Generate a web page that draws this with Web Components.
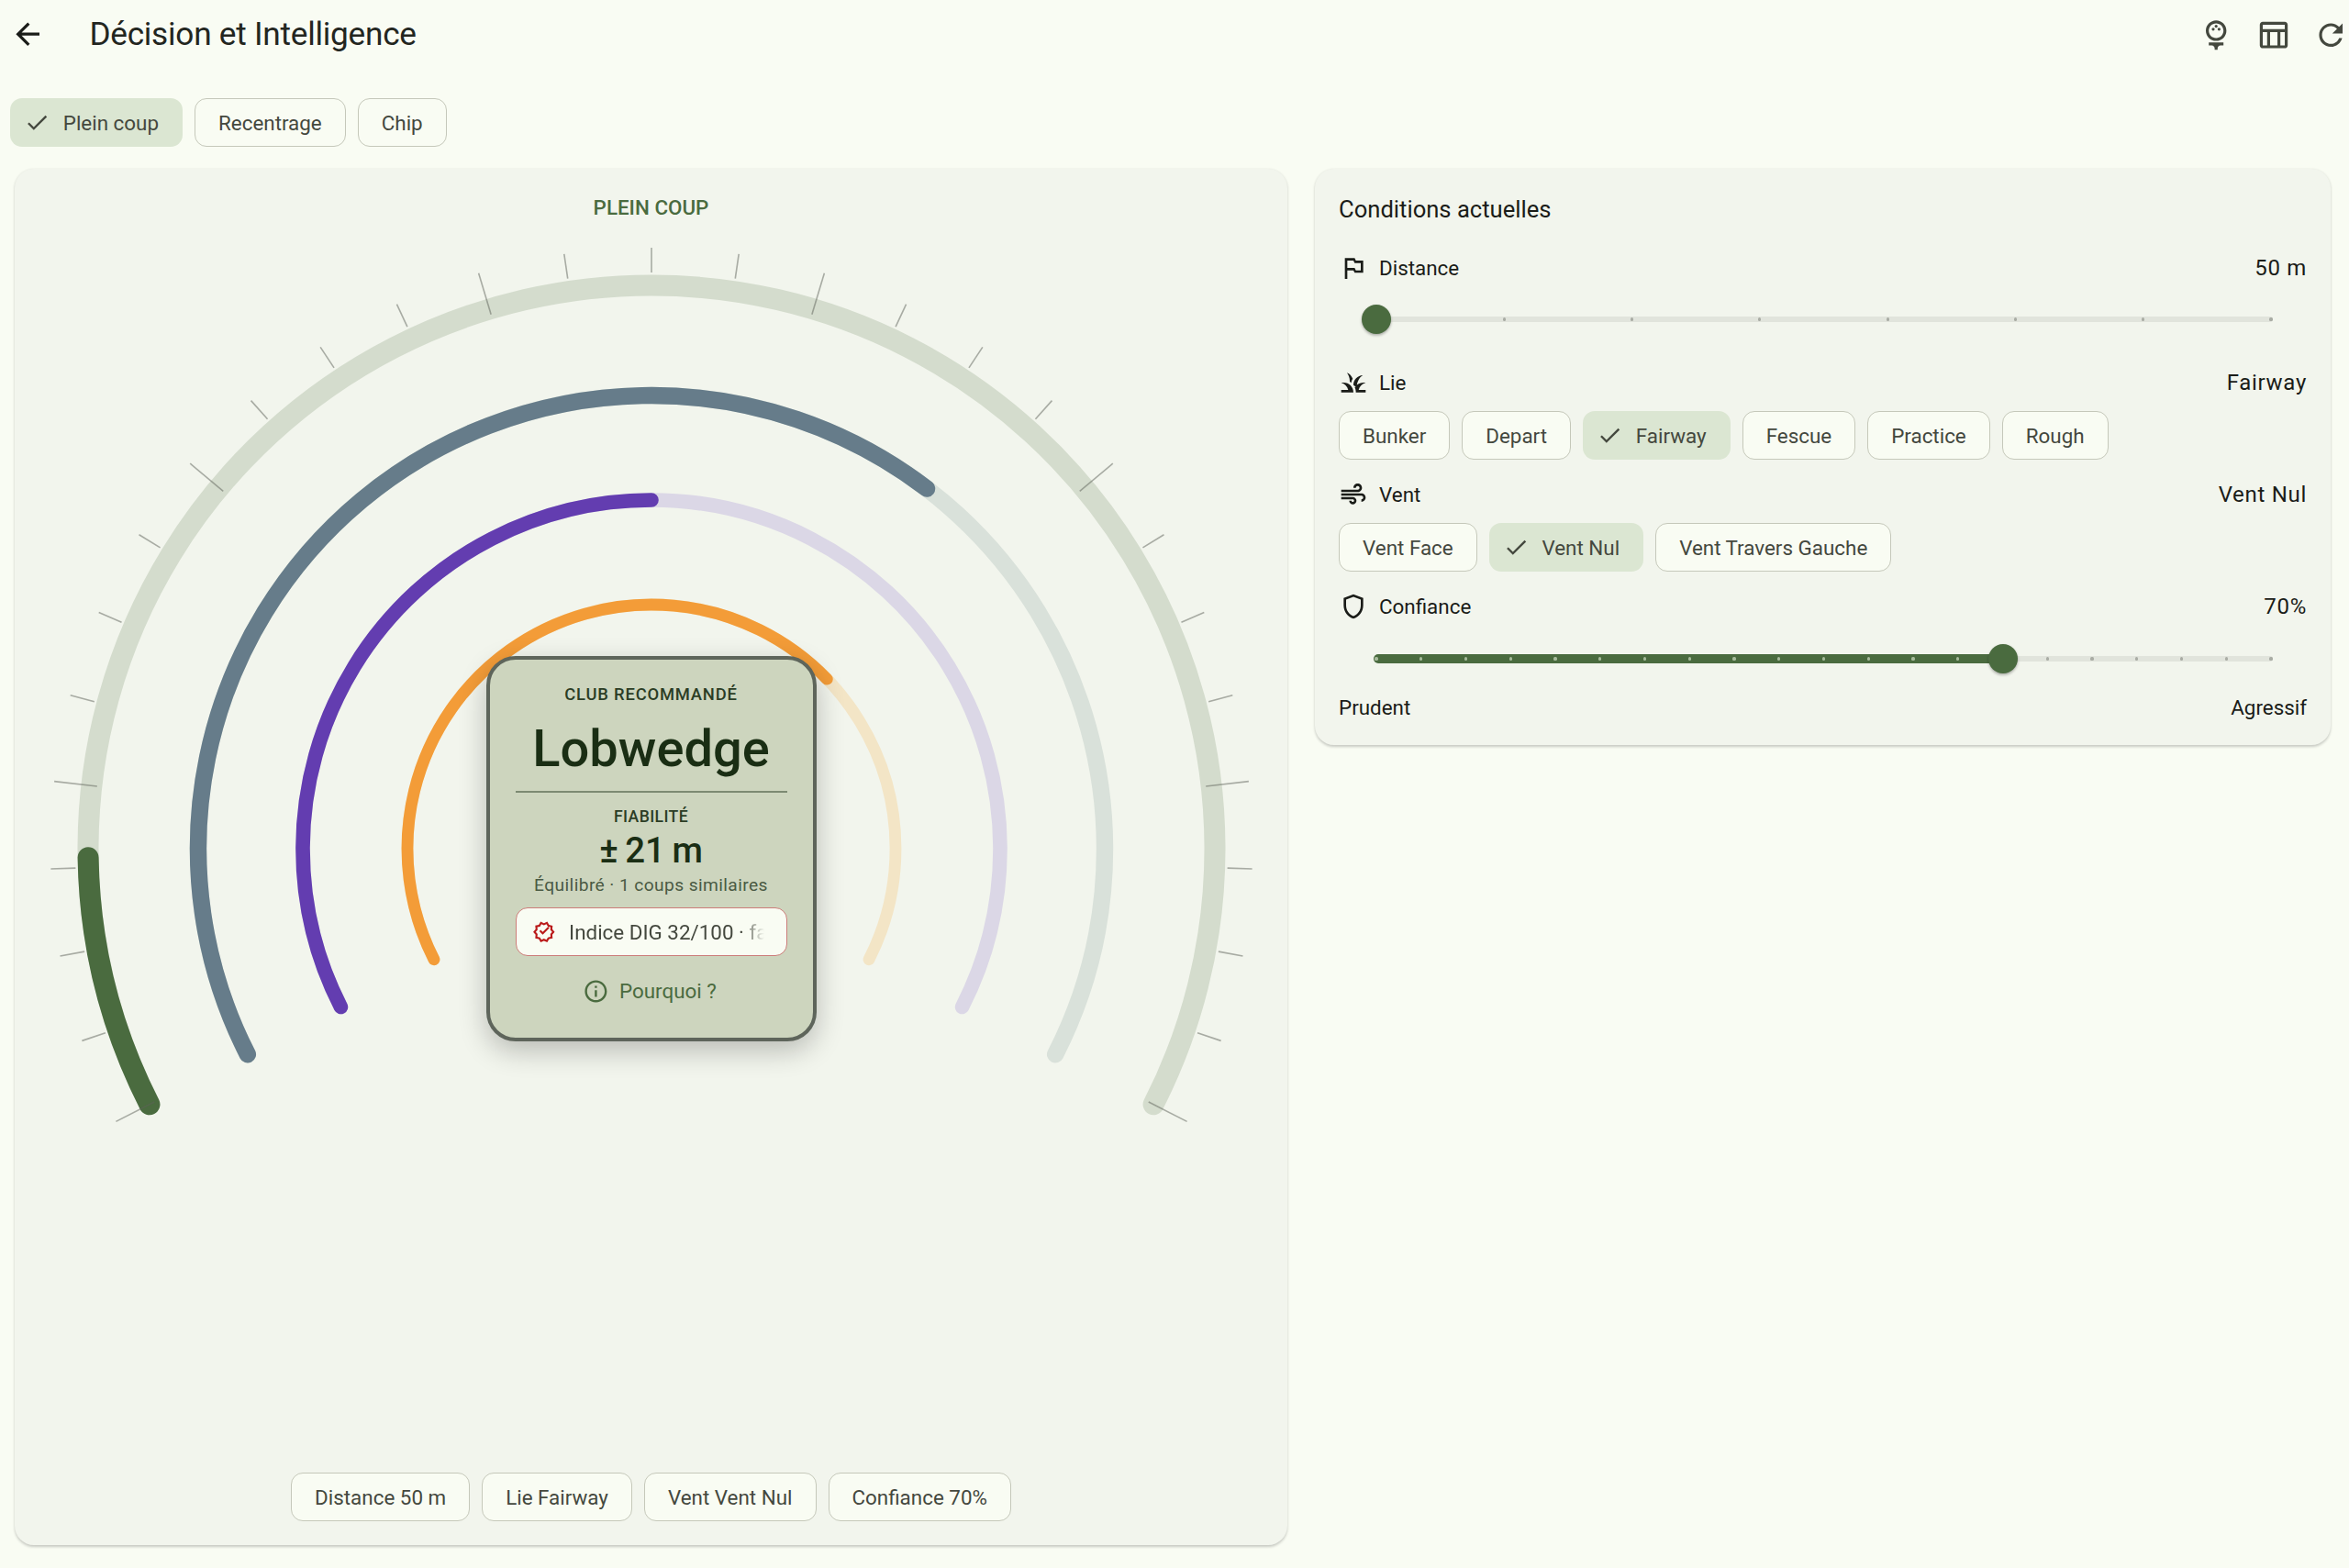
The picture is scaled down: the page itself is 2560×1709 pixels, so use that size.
<!DOCTYPE html>
<html lang="fr">
<head>
<meta charset="utf-8">
<title>Décision et Intelligence</title>
<style>
    html, body
    {
        margin: 0;
        background: #f9fcf3;
        font-family: Roboto, "Liberation Sans", sans-serif;
        color: #1a1c18;
    }
</style>
</head>
<body>

<decision-page>
    <app-bar slot="bar" heading="Décision et Intelligence"></app-bar>

    <chip-row slot="modes">
        <choice-chip selected>Plein coup</choice-chip>
        <choice-chip>Recentrage</choice-chip>
        <choice-chip>Chip</choice-chip>
    </chip-row>

    <gauge-panel slot="left" heading="PLEIN COUP">
        <club-card></club-card>
        <chip-row slot="summary">
            <choice-chip>Distance 50 m</choice-chip>
            <choice-chip>Lie Fairway</choice-chip>
            <choice-chip>Vent Vent Nul</choice-chip>
            <choice-chip>Confiance 70%</choice-chip>
        </chip-row>
    </gauge-panel>

    <conditions-panel slot="right"></conditions-panel>
</decision-page>

<script>
const ICONS =
{
    back: '<path d="M20 11H7.83l5.59-5.59L12 4l-8 8 8 8 1.41-1.41L7.83 13H20v-2z"/>',
    golf: '<path d="M12 16c3.87 0 7-3.13 7-7s-3.13-7-7-7-7 3.13-7 7 3.13 7 7 7zm0-12c2.76 0 5 2.24 5 5s-2.24 5-5 5-5-2.24-5-5 2.24-5 5-5z"/><circle cx="10" cy="8" r="1"/><circle cx="14" cy="8" r="1"/><circle cx="12" cy="6" r="1"/><path d="M7 19h2c1.1 0 2 .9 2 2v1h2v-1c0-1.1.9-2 2-2h2v-2H7v2z"/>',
    table: '<path d="M20 3H5c-1.1 0-2 .9-2 2v14c0 1.1.9 2 2 2h15c1.1 0 2-.9 2-2V5c0-1.1-.9-2-2-2zm0 2v3H5V5h15zm-5 14h-5v-9h5v9zM5 10h3v9H5v-9zm12 9v-9h3v9h-3z"/>',
    refresh: '<path d="M17.65 6.35C16.2 4.9 14.21 4 12 4c-4.42 0-7.99 3.58-7.99 8s3.57 8 7.99 8c3.73 0 6.84-2.55 7.73-6h-2.08c-.82 2.33-3.04 4-5.65 4-3.31 0-6-2.69-6-6s2.69-6 6-6c1.66 0 3.14.69 4.22 1.78L13 11h7V4l-2.35 2.35z"/>',
    check: '<path d="M9 16.17 4.83 12l-1.42 1.41L9 19 21 7l-1.41-1.41z"/>',
    flag: '<path d="M14 6l-1-2H5v17h2v-7h5l1 2h7V6h-6zm4 8h-4l-1-2H7V6h5l1 2h5v6z"/>',
    grass: '<path d="M12 20H2v-2h5.75C7.02 15.19 4.81 12.99 2 12.26 2.64 12.1 3.31 12 4 12c4.42 0 8 3.58 8 8zm10-7.74c-.64-.16-1.31-.26-2-.26-2.93 0-5.48 1.58-6.88 3.93.29.66.53 1.35.67 2.07.13.65.21 1.32.21 2h8v-2h-5.75c.73-2.81 2.94-5.01 5.75-5.74zm-6.36-1.24c.78-2.09 2.23-3.84 4.09-5-4.29.14-7.73 3.65-7.73 7.98v.02c.95.5 1.8 1.16 2.5 1.96.2-1.86.49-3.46 1.14-4.96zm-4.22-2.17C10.58 6.66 8.88 4.89 6.7 4 8.14 5.86 9 8.18 9 10.71c0 .21-.03.41-.04.61.43.24.83.52 1.22.82.21-1.18.65-2.29 1.24-3.29z"/>',
    air: '<path d="M14.5 17c0 1.65-1.35 3-3 3s-3-1.35-3-3h2c0 .55.45 1 1 1s1-.45 1-1-.45-1-1-1H2v-2h9.5c1.65 0 3 1.35 3 3zM19 6.5C19 4.57 17.43 3 15.5 3S12 4.57 12 6.5h2c0-.83.67-1.5 1.5-1.5s1.5.67 1.5 1.5S16.33 8 15.5 8H2v2h13.5c1.93 0 3.5-1.57 3.5-3.5zm-.5 4.5H2v2h16.5c.83 0 1.5.67 1.5 1.5s-.67 1.5-1.5 1.5v2c1.93 0 3.5-1.57 3.5-3.5S20.43 11 18.5 11z"/>',
    shield: '<path d="M12 2 4 5v6.09c0 5.05 3.41 9.76 8 10.91 4.59-1.15 8-5.86 8-10.91V5l-8-3zm6 9.09c0 4-2.55 7.7-6 8.83-3.45-1.13-6-4.82-6-8.83v-4.7l6-2.25 6 2.25v4.7z"/>',
    info: '<path d="M11 7h2v2h-2zm0 4h2v6h-2zm1-9C6.48 2 2 6.48 2 12s4.48 10 10 10 10-4.48 10-10S17.52 2 12 2zm0 18c-4.41 0-8-3.59-8-8s3.59-8 8-8 8 3.59 8 8-3.59 8-8 8z"/>',
    verified: '<path d="m23 12-2.44-2.79.34-3.69-3.61-.82-1.89-3.2L12 2.96 8.6 1.5 6.71 4.69 3.1 5.5l.34 3.7L1 12l2.44 2.79-.34 3.7 3.61.82L8.6 22.5l3.4-1.47 3.4 1.46 1.89-3.19 3.61-.82-.34-3.69L23 12zm-4.51 2.11.26 2.79-2.74.62-1.43 2.41L12 18.82l-2.58 1.11-1.43-2.41-2.74-.62.26-2.8L3.66 12l1.85-2.12-.26-2.78 2.74-.61 1.43-2.41L12 5.18l2.58-1.11 1.43 2.41 2.74.62-.26 2.79L20.34 12l-1.85 2.11z"/><path d="m10.09 13.75-2.32-2.33-1.48 1.49 3.8 3.81 7.34-7.36-1.48-1.49z" transform="translate(1.5 -.6) scale(.92)"/>'
}

class MIcon extends HTMLElement
{
    static get observedAttributes()
    {
        return ["name"]
    }

    constructor()
    {
        super()
        this.attachShadow({mode:"open"}).innerHTML = `
            <style>
                :host
                {
                    display: inline-flex;
                    flex: none;
                    width: var(--icon-size, 38.4px);
                    height: var(--icon-size, 38.4px);
                }
                svg
                {
                    display: block;
                    width: 100%;
                    height: 100%;
                    fill: currentColor;
                }
            </style>
            <svg viewBox="0 0 24 24"></svg>
        `
    }

    attributeChangedCallback(attr, before, name)
    {
        this.shadowRoot.querySelector("svg").innerHTML = ICONS[name] || ""
    }
}

const appBarTemplate = document.createElement("template")
appBarTemplate.innerHTML = `
    <style>
        :host
        {
            display: flex;
            align-items: center;
            box-sizing: border-box;
            height: 75px;
            padding: 0 1px 0 11px;
        }
        h1
        {
            margin: -2px 0 0 48px;
            flex: 1;
            font-size: 35.2px;
            font-weight: 400;
            letter-spacing: -.25px;
            color: #23261f;
        }
        .back
        {
            color: #1a1c18;
        }
        .actions
        {
            display: flex;
            gap: 24px;
            margin-top: 1px;
            color: #44483e;
        }
    </style>
    <m-icon class="back" name="back"></m-icon>
    <h1></h1>
    <div class="actions">
        <m-icon name="golf"></m-icon>
        <m-icon name="table"></m-icon>
        <m-icon name="refresh"></m-icon>
    </div>
`
class AppBar extends HTMLElement
{
    connectedCallback()
    {
        const shadow = this.attachShadow({mode:"open"})
        shadow.append(appBarTemplate.content.cloneNode(true))
        shadow.querySelector("h1").textContent = this.getAttribute("heading")
    }
}

const chipTemplate = document.createElement("template")
chipTemplate.innerHTML = `
    <style>
        *
        {
            box-sizing: border-box;
        }
        :host
        {
            display: inline-flex;
            flex: none;
        }
        .chip
        {
            display: flex;
            align-items: center;
            height: 53px;
            padding: 0 25px;
            border: 1.6px solid #c5c8ba;
            border-radius: 13px;
            background: #f9fcf3;
            color: #44483e;
            font-size: 22.4px;
            white-space: nowrap;
        }
        :host([selected]) .chip
        {
            padding: 0 25px 0 14px;
            border-color: transparent;
            background: #dbe6d2;
        }
        m-icon
        {
            display: none;
            margin-right: 14px;
            --icon-size: 28.8px;
        }
        :host([selected]) m-icon
        {
            display: inline-flex;
        }
    </style>
    <div class="chip"><m-icon name="check"></m-icon><slot></slot></div>
`
class ChoiceChip extends HTMLElement
{
    constructor()
    {
        super()
        this.attachShadow({mode:"open"}).append(chipTemplate.content.cloneNode(true))
    }
}

const chipRowTemplate = document.createElement("template")
chipRowTemplate.innerHTML = `
    <style>
        :host
        {
            display: flex;
            gap: 13px;
        }
    </style>
    <slot></slot>
`
class ChipRow extends HTMLElement
{
    constructor()
    {
        super()
        this.attachShadow({mode:"open"}).append(chipRowTemplate.content.cloneNode(true))
    }
}

const clubCardTemplate = document.createElement("template")
clubCardTemplate.innerHTML = `
    <style>
        *
        {
            box-sizing: border-box;
        }
        :host
        {
            box-sizing: border-box;
            position: absolute;
            left: 50%;
            top: 473px;
            width: 360px;
            height: 420px;
            margin-left: -180px;
            display: flex;
            flex-direction: column;
            align-items: center;
            padding: 27px 28px 0;
            border: 4px solid #5e655b;
            border-radius: 32px;
            background: #cdd5be;
            box-shadow: 0 10px 30px rgba(0, 0, 0, .24);
            color: #1a2e14;
            text-align: center;
        }
        .eyebrow
        {
            font-size: 18.4px;
            font-weight: 500;
            line-height: 22px;
            letter-spacing: .8px;
            color: #2b3d25;
        }
        .club
        {
            font-size: 56px;
            font-weight: 500;
            line-height: 70px;
            margin-top: 13px;
        }
        .rule
        {
            align-self: stretch;
            height: 2px;
            margin-top: 11px;
            background: #7d8a72;
        }
        .fiab
        {
            margin-top: 15px;
            font-size: 17.6px;
            letter-spacing: .4px;
        }
        .spread
        {
            font-size: 38.4px;
            font-weight: 500;
            line-height: 46px;
            margin-top: 3px;
            word-spacing: -2px;
        }
        .sub
        {
            font-size: 19.2px;
            line-height: 26px;
            letter-spacing: .4px;
            margin-top: 2px;
            color: #4a5a44;
            white-space: nowrap;
        }
        .pill
        {
            align-self: stretch;
            display: flex;
            align-items: center;
            height: 53px;
            margin-top: 11px;
            padding: 0 24px 0 17px;
            border: 1.6px solid #cc7d79;
            border-radius: 13px;
            background: #f9fcf3;
        }
        .pill m-icon
        {
            color: #ba1a1a;
            margin-right: 15px;
            --icon-size: 25.6px;
        }
        .pill span
        {
            flex: 1;
            min-width: 0;
            overflow: hidden;
            white-space: nowrap;
            font-size: 22.4px;
            text-align: left;
            color: #44483e;
            -webkit-mask-image: linear-gradient(to right, #000 88%, transparent);
            mask-image: linear-gradient(to right, #000 88%, transparent);
        }
        .why
        {
            display: flex;
            align-items: center;
            gap: 11px;
            margin: 22px 3px 0 0;
            font-size: 22.4px;
            line-height: 32px;
            color: #4a6b3f;
            --icon-size: 28.8px;
        }
    </style>
    <div class="eyebrow">CLUB RECOMMANDÉ</div>
    <div class="club">Lobwedge</div>
    <div class="rule"></div>
    <div class="eyebrow fiab">FIABILITÉ</div>
    <div class="spread">± 21 m</div>
    <div class="sub">Équilibré · 1 coups similaires</div>
    <div class="pill"><m-icon name="verified"></m-icon><span>Indice DIG 32/100 · faible</span></div>
    <div class="why"><m-icon name="info"></m-icon>Pourquoi ?</div>
`
class ClubCard extends HTMLElement
{
    constructor()
    {
        super()
        this.attachShadow({mode:"open"}).append(clubCardTemplate.content.cloneNode(true))
    }
}

// angles in degrees, 0 at the top of the dial, clockwise
const GAUGE_CX = 694
const GAUGE_CY = 683
const GAUGE_START = -117
const GAUGE_END = 117

function polar(r, deg)
{
    const a = deg * Math.PI / 180
    return [GAUGE_CX + r * Math.sin(a), GAUGE_CY - r * Math.cos(a)]
}

function arc(r, from, to, color, width)
{
    const [x1, y1] = polar(r, from)
    const [x2, y2] = polar(r, to)
    const large = to - from > 180 ? 1 : 0
    return `<path d="M${x1} ${y1}A${r} ${r} 0 ${large} 1 ${x2} ${y2}" fill="none" stroke="${color}" stroke-width="${width}" stroke-linecap="round"/>`
}

const RINGS =
[
    {r: 614, width: 23, track: "#d4dccd", fill: "#4a6b3f", to: -90.9},
    {r: 494, width: 18.4, track: "#d9e1da", fill: "#667c8a", to: 37.4},
    {r: 380, width: 15.6, track: "#dbd7e6", fill: "#633db0", to: 0},
    {r: 266, width: 12.8, track: "#f3e5c6", fill: "#f39c38", to: 46}
]

const gaugeTemplate = document.createElement("template")
gaugeTemplate.innerHTML = `
    <style>
        *
        {
            box-sizing: border-box;
        }
        :host
        {
            box-sizing: border-box;
            display: flex;
            flex-direction: column;
            align-items: center;
            height: 1500px;
            border-radius: 21px;
            background: #f2f5ed;
            box-shadow: 0 1.6px 3px rgba(0, 0, 0, .2);
            padding: 26px 0 26px;
        }
        h2
        {
            margin: 0;
            font-size: 22.4px;
            line-height: 32px;
            font-weight: 500;
            color: #4a6b3f;
        }
        .dial
        {
            position: relative;
            width: 100%;
            height: 1000px;
        }
        svg
        {
            display: block;
            width: 100%;
            height: 100%;
        }
        .summary
        {
            margin-top: auto;
        }
    </style>
    <h2></h2>
    <div class="dial">
        <svg viewBox="0 0 1387 1000"></svg>
        <slot></slot>
    </div>
    <div class="summary"><slot name="summary"></slot></div>
`
class GaugePanel extends HTMLElement
{
    connectedCallback()
    {
        const shadow = this.attachShadow({mode:"open"})
        shadow.append(gaugeTemplate.content.cloneNode(true))
        shadow.querySelector("h2").textContent = this.getAttribute("heading")

        let marks = ""
        for (const ring of RINGS)
        {
            marks += arc(ring.r, GAUGE_START, GAUGE_END, ring.track, ring.width)
            marks += arc(ring.r, GAUGE_START, ring.to, ring.fill, ring.width)
        }
        for (let i = -14; i <= 14; i++)
        {
            const deg = i * 234 / 28
            const major = (i + 14) % 4 === 0
            const [x1, y1] = polar(major ? 608 : 628, deg)
            const [x2, y2] = polar(655, deg)
            marks += `<line x1="${x1}" y1="${y1}" x2="${x2}" y2="${y2}" stroke="#5d625a" stroke-opacity=".5" stroke-width="1.6"/>`
        }
        shadow.querySelector("svg").innerHTML = marks
    }
}

const rowTemplate = document.createElement("template")
rowTemplate.innerHTML = `
    <style>
        :host
        {
            display: flex;
            align-items: center;
            height: 32px;
            font-size: 22.4px;
            color: #1a1c18;
        }
        m-icon
        {
            margin-right: 12px;
            color: #1a1c18;
            --icon-size: 32px;
        }
        .value
        {
            margin-left: auto;
            font-size: 24px;
            letter-spacing: .7px;
        }
    </style>
    <m-icon></m-icon>
    <span class="label"></span>
    <span class="value"></span>
`
class ConditionRow extends HTMLElement
{
    connectedCallback()
    {
        const shadow = this.attachShadow({mode:"open"})
        shadow.append(rowTemplate.content.cloneNode(true))
        shadow.querySelector("m-icon").setAttribute("name", this.getAttribute("icon"))
        shadow.querySelector(".label").textContent = this.getAttribute("label")
        shadow.querySelector(".value").textContent = this.getAttribute("value")
    }
}

const sliderTemplate = document.createElement("template")
sliderTemplate.innerHTML = `
    <style>
        *
        {
            box-sizing: border-box;
        }
        :host
        {
            box-sizing: border-box;
            display: block;
            height: 52px;
            padding: 0 39px 0 41px;
        }
        .rail
        {
            position: relative;
            height: 100%;
        }
        .track, .active, .dot, .thumb
        {
            position: absolute;
            top: 50%;
        }
        .track
        {
            left: -3px;
            right: -2px;
            height: 6px;
            margin-top: -3px;
            border-radius: 3px;
            background: #e1e4dc;
        }
        .active
        {
            left: -3px;
            height: 9.6px;
            margin-top: -4.8px;
            border-radius: 5px;
            background: #4a6b3f;
        }
        .dot
        {
            width: 3.2px;
            height: 3.2px;
            margin: -1.6px 0 0 -1.6px;
            border-radius: 50%;
            background: #a9aca4;
        }
        .dot.on
        {
            background: #a7bb9c;
        }
        .thumb
        {
            width: 32px;
            height: 32px;
            margin: -16px 0 0 -16px;
            border-radius: 50%;
            background: #4a6b3f;
            box-shadow: 0 1.6px 3px rgba(0, 0, 0, .3);
        }
    </style>
    <div class="rail"></div>
`
class MSlider extends HTMLElement
{
    connectedCallback()
    {
        const shadow = this.attachShadow({mode:"open"})
        shadow.append(sliderTemplate.content.cloneNode(true))
        const value = Number(this.getAttribute("value"))
        const divisions = Number(this.getAttribute("divisions"))

        let html = `<div class="track"></div>`
        if (value > 0) html += `<div class="active" style="width: calc(${value * 100}% + 3px)"></div>`
        for (let i = 0; i <= divisions; i++)
        {
            const at = i / divisions
            if (value === 0 && i === 0) continue
            html += `<div class="dot ${at <= value ? "on" : ""}" style="left: ${at * 100}%"></div>`
        }
        html += `<div class="thumb" style="left: ${value * 100}%"></div>`
        shadow.querySelector(".rail").innerHTML = html
    }
}

const conditionsTemplate = document.createElement("template")
conditionsTemplate.innerHTML = `
    <style>
        *
        {
            box-sizing: border-box;
        }
        :host
        {
            box-sizing: border-box;
            display: block;
            align-self: start;
            height: 628px;
            padding: 26px;
            border-radius: 21px;
            background: #f2f5ed;
            box-shadow: 0 1.6px 3px rgba(0, 0, 0, .2);
        }
        h2
        {
            margin: 0;
            font-size: 25.6px;
            line-height: 36px;
            font-weight: 400;
            color: #1a1c18;
        }
        .ends
        {
            display: flex;
            justify-content: space-between;
            margin-top: 11px;
            font-size: 22.4px;
            line-height: 32px;
        }
    </style>
    <h2>Conditions actuelles</h2>
    <condition-row style="margin-top: 30px" icon="flag" label="Distance" value="50 m"></condition-row>
    <m-slider style="margin-top: 14px" value="0" divisions="7"></m-slider>
    <condition-row style="margin-top: 27px" icon="grass" label="Lie" value="Fairway"></condition-row>
    <chip-row style="margin-top: 15px">
        <choice-chip>Bunker</choice-chip>
        <choice-chip>Depart</choice-chip>
        <choice-chip selected>Fairway</choice-chip>
        <choice-chip>Fescue</choice-chip>
        <choice-chip>Practice</choice-chip>
        <choice-chip>Rough</choice-chip>
    </chip-row>
    <condition-row style="margin-top: 22px" icon="air" label="Vent" value="Vent Nul"></condition-row>
    <chip-row style="margin-top: 15px">
        <choice-chip>Vent Face</choice-chip>
        <choice-chip selected>Vent Nul</choice-chip>
        <choice-chip>Vent Travers Gauche</choice-chip>
    </chip-row>
    <condition-row style="margin-top: 22px" icon="shield" label="Confiance" value="70%"></condition-row>
    <m-slider style="margin-top: 15px" value="0.7" divisions="20"></m-slider>
    <div class="ends"><span>Prudent</span><span>Agressif</span></div>
`
class ConditionsPanel extends HTMLElement
{
    constructor()
    {
        super()
        this.attachShadow({mode:"open"}).append(conditionsTemplate.content.cloneNode(true))
    }
}

const pageTemplate = document.createElement("template")
pageTemplate.innerHTML = `
    <style>
        *
        {
            box-sizing: border-box;
        }
        :host
        {
            display: block;
            height: 1709px;
            overflow: hidden;
        }
        .modes
        {
            margin: 32px 0 24px 11px;
        }
        .columns
        {
            display: grid;
            grid-template-columns: 1387px 1107px;
            gap: 30px;
            padding-left: 16px;
        }
    </style>
    <slot name="bar"></slot>
    <div class="modes"><slot name="modes"></slot></div>
    <div class="columns">
        <slot name="left"></slot>
        <slot name="right"></slot>
    </div>
`
class DecisionPage extends HTMLElement
{
    constructor()
    {
        super()
        this.attachShadow({mode:"open"}).append(pageTemplate.content.cloneNode(true))
    }
}

customElements.define("m-icon", MIcon)
customElements.define("app-bar", AppBar)
customElements.define("choice-chip", ChoiceChip)
customElements.define("chip-row", ChipRow)
customElements.define("club-card", ClubCard)
customElements.define("gauge-panel", GaugePanel)
customElements.define("condition-row", ConditionRow)
customElements.define("m-slider", MSlider)
customElements.define("conditions-panel", ConditionsPanel)
customElements.define("decision-page", DecisionPage)
</script>
</body>
</html>
